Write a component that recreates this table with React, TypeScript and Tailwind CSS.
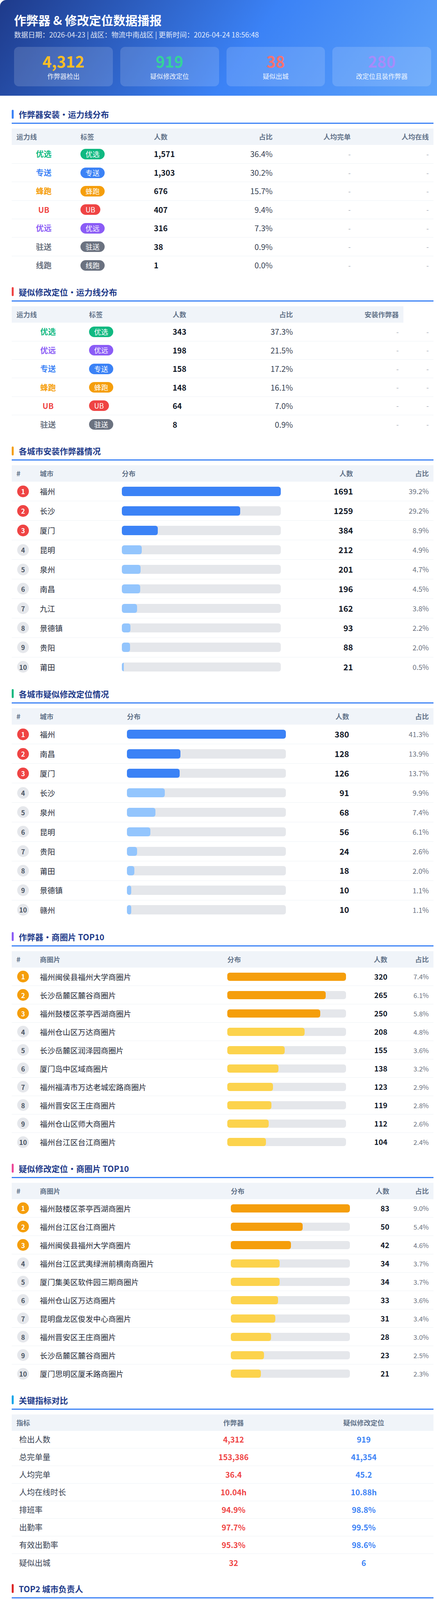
import React from 'react';

const lineStyle: Record<string, { text: string; bg: string }> = {
  优选: { text: 'text-[#10b981]', bg: 'bg-[#10b981]' },
  专送: { text: 'text-[#3b82f6]', bg: 'bg-[#3b82f6]' },
  蜂跑: { text: 'text-[#f59e0b]', bg: 'bg-[#f59e0b]' },
  UB: { text: 'text-[#ef4444]', bg: 'bg-[#ef4444]' },
  优远: { text: 'text-[#8b5cf6]', bg: 'bg-[#8b5cf6]' },
  驻送: { text: 'text-[#6b7280]', bg: 'bg-[#6b7280]' },
  线跑: { text: 'text-[#6b7280]', bg: 'bg-[#6b7280]' },
};

const installLines = [
  ['优选', '1,571', '36.4%'],
  ['专送', '1,303', '30.2%'],
  ['蜂跑', '676', '15.7%'],
  ['UB', '407', '9.4%'],
  ['优远', '316', '7.3%'],
  ['驻送', '38', '0.9%'],
  ['线跑', '1', '0.0%'],
];

const fakeLines = [
  ['优选', '343', '37.3%'],
  ['优远', '198', '21.5%'],
  ['专送', '158', '17.2%'],
  ['蜂跑', '148', '16.1%'],
  ['UB', '64', '7.0%'],
  ['驻送', '8', '0.9%'],
];

type RankRow = [string, number, string];

const installCities: RankRow[] = [
  ['福州', 1691, '39.2%'],
  ['长沙', 1259, '29.2%'],
  ['厦门', 384, '8.9%'],
  ['昆明', 212, '4.9%'],
  ['泉州', 201, '4.7%'],
  ['南昌', 196, '4.5%'],
  ['九江', 162, '3.8%'],
  ['景德镇', 93, '2.2%'],
  ['贵阳', 88, '2.0%'],
  ['莆田', 21, '0.5%'],
];

const fakeCities: RankRow[] = [
  ['福州', 380, '41.3%'],
  ['南昌', 128, '13.9%'],
  ['厦门', 126, '13.7%'],
  ['长沙', 91, '9.9%'],
  ['泉州', 68, '7.4%'],
  ['昆明', 56, '6.1%'],
  ['贵阳', 24, '2.6%'],
  ['莆田', 18, '2.0%'],
  ['景德镇', 10, '1.1%'],
  ['赣州', 10, '1.1%'],
];

const installAreas: RankRow[] = [
  ['福州闽侯县福州大学商圈片', 320, '7.4%'],
  ['长沙岳麓区麓谷商圈片', 265, '6.1%'],
  ['福州鼓楼区茶亭西湖商圈片', 250, '5.8%'],
  ['福州仓山区万达商圈片', 208, '4.8%'],
  ['长沙岳麓区润泽园商圈片', 155, '3.6%'],
  ['厦门岛中区域商圈片', 138, '3.2%'],
  ['福州福清市万达老城宏路商圈片', 123, '2.9%'],
  ['福州晋安区王庄商圈片', 119, '2.8%'],
  ['福州仓山区师大商圈片', 112, '2.6%'],
  ['福州台江区台江商圈片', 104, '2.4%'],
];

const fakeAreas: RankRow[] = [
  ['福州鼓楼区茶亭西湖商圈片', 83, '9.0%'],
  ['福州台江区台江商圈片', 50, '5.4%'],
  ['福州闽侯县福州大学商圈片', 42, '4.6%'],
  ['福州台江区武夷绿洲前横南商圈片', 34, '3.7%'],
  ['厦门集美区软件园三期商圈片', 34, '3.7%'],
  ['福州仓山区万达商圈片', 33, '3.6%'],
  ['昆明盘龙区俊发中心商圈片', 31, '3.4%'],
  ['福州晋安区王庄商圈片', 28, '3.0%'],
  ['长沙岳麓区麓谷商圈片', 23, '2.5%'],
  ['厦门思明区厦禾路商圈片', 21, '2.3%'],
];

const metrics = [
  ['检出人数', '4,312', '919'],
  ['总完单量', '153,386', '41,354'],
  ['人均完单', '36.4', '45.2'],
  ['人均在线时长', '10.04h', '10.88h'],
  ['排班率', '94.9%', '98.8%'],
  ['出勤率', '97.7%', '99.5%'],
  ['有效出勤率', '95.3%', '98.6%'],
  ['疑似出城', '32', '6'],
];

const owners = [
  { city: '福州', cheat: 1691, fake: 380, people: ['黎祥斌', '林灿杰'] },
  { city: '长沙', cheat: 1259, fake: 91, people: ['袁兴辉', '杨滨'] },
  { city: '南昌', cheat: 196, fake: 128, people: ['余南南'] },
];

const stats = [
  { value: '4,312', label: '作弊器检出', color: 'text-[#fbbf24]' },
  { value: '919', label: '疑似修改定位', color: 'text-[#34d399]' },
  { value: '38', label: '疑似出城', color: 'text-[#f87171]' },
  { value: '280', label: '改定位且装作弊器', color: 'text-[#a78bfa]' },
];

const th = 'h-[42px] bg-[#f0f4f9] px-[12px] text-[17.5px] font-bold text-[#64748b]';
const rowLine = 'border-b border-[#eef2f6]';

const Section: React.FC<{ title: string; bar: string; children: React.ReactNode }> = ({ title, bar, children }) => (
  <section>
    <div className="flex items-center gap-[13px] pb-[8px] border-b-[3px] border-[#3b82f6]">
      <span className={`w-[5px] h-[23px] rounded-full ${bar}`} />
      <h2 className="text-[21px] leading-[28px] font-bold text-[#1e3a8a]">{title}</h2>
    </div>
    <div className="mt-[12px]">{children}</div>
  </section>
);

const Rank: React.FC<{ n: number; top: string }> = ({ n, top }) => (
  <span
    className={`flex w-[30px] h-[30px] items-center justify-center rounded-full text-[17px] font-bold ${
      n <= 3 ? `${top} text-white` : 'bg-[#e5e7eb] text-[#4b5563]'
    }`}
  >
    {n}
  </span>
);

const LineTable: React.FC<{ rows: string[][]; fake?: boolean }> = ({ rows, fake }) => {
  const widths = fake
    ? ['w-[186px]', 'w-[214px]', 'w-[166px]', 'w-[166px]', 'w-[271px]', 'w-[77px]']
    : ['w-[164px]', 'w-[188px]', 'w-[164px]', 'w-[164px]', 'w-[200px]', 'w-[200px]'];
  return (
    <table className="w-full table-fixed border-collapse">
      <colgroup>
        {widths.map((w, i) => (
          <col key={i} className={w} />
        ))}
      </colgroup>
      <thead>
        <tr>
          <th className={`${th} text-left`}>运力线</th>
          <th className={`${th} text-left`}>标签</th>
          <th className={`${th} text-left`}>人数</th>
          <th className={`${th} text-right`}>占比</th>
          {fake ? (
            <th className={`${th} text-right`}>安装作弊器</th>
          ) : (
            <>
              <th className={`${th} text-right`}>人均完单</th>
              <th className={`${th} text-right`}>人均在线</th>
            </>
          )}
        </tr>
      </thead>
      <tbody>
        {rows.map(([name, count, pct], i) => (
          <tr key={i} className={`h-[47.4px] ${i < rows.length - 1 ? rowLine : ''}`}>
            <td className={`px-[12px] text-center text-[20px] font-bold ${lineStyle[name].text}`}>{name}</td>
            <td className="px-[12px]">
              <span className={`inline-block rounded-full px-[13px] py-[3px] text-[18px] leading-[21px] text-white ${lineStyle[name].bg}`}>
                {name}
              </span>
            </td>
            <td className="px-[12px] text-[20px] font-bold text-[#111827]">{count}</td>
            <td className="px-[12px] text-right text-[20px] text-[#374151]">{pct}</td>
            <td className="px-[12px] text-right text-[18px] text-[#9ca3af]">-</td>
            <td className="px-[12px] text-right text-[18px] text-[#9ca3af]">-</td>
          </tr>
        ))}
      </tbody>
    </table>
  );
};

const BarTable: React.FC<{
  rows: RankRow[];
  label: string;
  widths: string[];
  rank: string;
  strong: string;
  soft: string;
  rowH: string;
  barH: string;
  countSize: string;
  pctSize: string;
}> = ({ rows, label, widths, rank, strong, soft, rowH, barH, countSize, pctSize }) => {
  const max = Math.max(...rows.map((r) => r[1]));
  return (
    <table className="w-full table-fixed border-collapse">
      <colgroup>
        {widths.map((w, i) => (
          <col key={i} className={w} />
        ))}
      </colgroup>
      <thead>
        <tr>
          <th className={`${th} text-left`}>#</th>
          <th className={`${th} text-left`}>{label}</th>
          <th className={`${th} text-left`}>分布</th>
          <th className={`${th} text-right`}>人数</th>
          <th className={`${th} text-right`}>占比</th>
        </tr>
      </thead>
      <tbody>
        {rows.map(([name, count, pct], i) => (
          <tr key={i} className={`${rowH} ${i < rows.length - 1 ? rowLine : ''}`}>
            <td className="pl-[14px]">
              <Rank n={i + 1} top={rank} />
            </td>
            <td className="px-[12px] text-[19.5px] text-[#1f2937] whitespace-nowrap">{name}</td>
            <td className="px-[12px]">
              <div className={`${barH} w-full rounded-[6px] bg-[#e5e7eb] overflow-hidden`}>
                <div
                  className={`h-full rounded-[6px] ${i < 3 ? strong : soft}`}
                  style={{ width: `${(count / max) * 100}%` }}
                />
              </div>
            </td>
            <td className={`px-[12px] text-right font-bold text-[#111827] ${countSize}`}>{count}</td>
            <td className={`px-[12px] text-right text-[#6b7280] ${pctSize}`}>{pct}</td>
          </tr>
        ))}
      </tbody>
    </table>
  );
};

export default function App() {
  return (
    <div className="w-full overflow-hidden bg-white pb-[18px] font-['Noto_Sans_CJK_SC','Noto_Sans',sans-serif]">
      <div className="w-[1140px] overflow-hidden rounded-2xl bg-white shadow-[0_4px_20px_rgba(15,23,42,0.1)]">
        <header className="bg-[linear-gradient(125deg,#1e3a8a_0%,#3b82f6_55%,#60a5fa_100%)] px-[36px] pt-[31px] pb-[24px]">
          <h1 className="text-[31px] leading-[39px] font-bold text-white">作弊器 &amp; 修改定位数据播报</h1>
          <p className="mt-[5px] text-[18px] leading-[27px] text-white/85">
            数据日期：2026-04-23 | 战区：物流中南战区 | 更新时间：2026-04-24 18:56:48
          </p>
          <div className="mt-[18px] grid grid-cols-4 gap-[19px]">
            {stats.map((s) => (
              <div key={s.label} className="flex flex-col items-center rounded-[12px] bg-white/15 pt-[16px] pb-[14px]">
                <span className={`text-[40px] leading-[40px] font-bold ${s.color}`}>{s.value}</span>
                <span className="mt-[8px] text-[16.5px] leading-[23px] text-white/90">{s.label}</span>
              </div>
            ))}
          </div>
        </header>

        <main className="flex flex-col gap-[30px] px-[30px] pt-[33px] pb-[39px]">
          <Section title="作弊器安装・运力线分布" bar="bg-[#3b82f6]">
            <LineTable rows={installLines} />
          </Section>

          <Section title="疑似修改定位・运力线分布" bar="bg-[#ef4444]">
            <LineTable rows={fakeLines} fake />
          </Section>

          <Section title="各城市安装作弊器情况" bar="bg-[#f59e0b]">
            <BarTable
              rows={installCities}
              label="城市"
              widths={['w-[60px]', 'w-[210px]', 'w-[431px]', 'w-[185px]', 'w-[194px]']}
              rank="bg-[#ef4444]"
              strong="bg-[#3b82f6]"
              soft="bg-[#93c5fd]"
              rowH="h-[49.9px]"
              barH="h-[23.5px]"
              countSize="text-[21px]"
              pctSize="text-[18px]"
            />
          </Section>

          <Section title="各城市疑似修改定位情况" bar="bg-[#10b981]">
            <BarTable
              rows={fakeCities}
              label="城市"
              widths={['w-[60px]', 'w-[223px]', 'w-[431px]', 'w-[162px]', 'w-[204px]']}
              rank="bg-[#ef4444]"
              strong="bg-[#3b82f6]"
              soft="bg-[#93c5fd]"
              rowH="h-[49.9px]"
              barH="h-[23.5px]"
              countSize="text-[21px]"
              pctSize="text-[18px]"
            />
          </Section>

          <Section title="作弊器・商圈片 TOP10" bar="bg-[#8b5cf6]">
            <BarTable
              rows={installAreas}
              label="商圈片"
              widths={['w-[60px]', 'w-[480px]', 'w-[328px]', 'w-[106px]', 'w-[106px]']}
              rank="bg-[#f59e0b]"
              strong="bg-[#f59e0b]"
              soft="bg-[#fcd34d]"
              rowH="h-[47px]"
              barH="h-[21px]"
              countSize="text-[19px]"
              pctSize="text-[17px]"
            />
          </Section>

          <Section title="疑似修改定位・商圈片 TOP10" bar="bg-[#ec4899]">
            <BarTable
              rows={fakeAreas}
              label="商圈片"
              widths={['w-[60px]', 'w-[489px]', 'w-[329px]', 'w-[101px]', 'w-[101px]']}
              rank="bg-[#f59e0b]"
              strong="bg-[#f59e0b]"
              soft="bg-[#fcd34d]"
              rowH="h-[47px]"
              barH="h-[21px]"
              countSize="text-[19px]"
              pctSize="text-[17px]"
            />
          </Section>

          <Section title="关键指标对比" bar="bg-[#0ea5e9]">
            <table className="w-full table-fixed border-collapse">
              <colgroup>
                <col className="w-[413px]" />
                <col className="w-[310px]" />
                <col className="w-[357px]" />
              </colgroup>
              <thead>
                <tr>
                  <th className={`${th} text-left`}>指标</th>
                  <th className={`${th} text-center`}>作弊器</th>
                  <th className={`${th} text-center`}>疑似修改定位</th>
                </tr>
              </thead>
              <tbody>
                {metrics.map(([name, a, b], i) => (
                  <tr key={name} className={`h-[45px] ${i < metrics.length - 1 ? rowLine : ''}`}>
                    <td className="pl-[19px] text-[20px] text-[#374151]">{name}</td>
                    <td className="text-center text-[20px] font-bold text-[#ef4444]">{a}</td>
                    <td className="text-center text-[20px] font-bold text-[#3b82f6]">{b}</td>
                  </tr>
                ))}
              </tbody>
            </table>
          </Section>

          <Section title="TOP2 城市负责人" bar="bg-[#dc2626]">
            <table className="w-full table-fixed border-collapse">
              <colgroup>
                <col className="w-[140px]" />
                <col className="w-[244px]" />
                <col className="w-[271px]" />
                <col className="w-[425px]" />
              </colgroup>
              <thead>
                <tr>
                  <th className={`${th} pl-[19px] text-left`}>城市</th>
                  <th className={`${th} text-center`}>作弊器人数</th>
                  <th className={`${th} text-center`}>修改定位人数</th>
                  <th className={`${th} pl-[18px] text-left`}>负责人</th>
                </tr>
              </thead>
              <tbody>
                {owners.map((o, i) => (
                  <tr key={o.city} className={`h-[59px] ${i < owners.length - 1 ? rowLine : ''}`}>
                    <td className="pl-[19px] text-[19.5px] font-bold text-[#111827]">{o.city}</td>
                    <td className="text-center text-[19.5px] text-[#ef4444]">{o.cheat}</td>
                    <td className="text-center text-[19.5px] text-[#3b82f6]">{o.fake}</td>
                    <td className="pl-[23px]">
                      <div className="flex gap-[15px]">
                        {o.people.map((p) => (
                          <span
                            key={p}
                            className="rounded-full bg-[#fef3c7] px-[14px] text-[18px] leading-[30px] font-bold text-[#92400e]"
                          >
                            {p}
                          </span>
                        ))}
                      </div>
                    </td>
                  </tr>
                ))}
              </tbody>
            </table>
          </Section>
        </main>

        <footer className="flex h-[46px] items-center justify-center border-t border-[#e5e7eb] bg-[#f8fafc] text-[16px] text-[#94a3b8]">
          数据播报由系统自动生成 · 2026-04-24 18:56:48
        </footer>
      </div>
    </div>
  );
}
